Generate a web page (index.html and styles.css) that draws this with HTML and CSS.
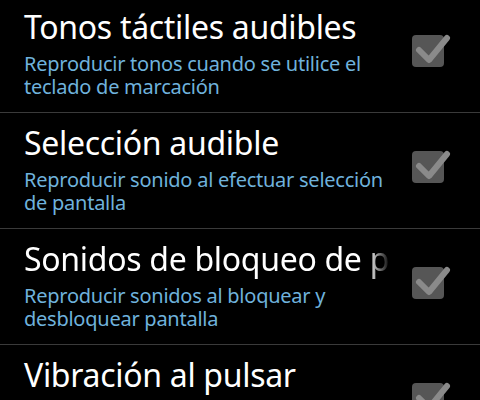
FILE: index.html
```html
<!DOCTYPE html>
<html lang="es">
<head>
<meta charset="utf-8">
<link rel="stylesheet" href="styles.css">
</head>
<body>
<div class="list">
  <div class="row">
    <div class="text">
      <div class="title">Tonos táctiles audibles</div>
      <div class="summary">Reproducir tonos cuando se utilice el teclado de marcación</div>
    </div>
    <div class="check"><svg viewBox="0 0 44 40" width="44" height="40"><rect x="4" y="6" width="32" height="32" rx="4" fill="#565656"/><path d="M11 21 L21 31 L39 9" fill="none" stroke="#8a8a8a" stroke-width="6" stroke-linecap="round" stroke-linejoin="round"/></svg></div>
  </div>
  <div class="row">
    <div class="text">
      <div class="title">Selección audible</div>
      <div class="summary">Reproducir sonido al efectuar selección de pantalla</div>
    </div>
    <div class="check"><svg viewBox="0 0 44 40" width="44" height="40"><rect x="4" y="6" width="32" height="32" rx="4" fill="#565656"/><path d="M11 21 L21 31 L39 9" fill="none" stroke="#8a8a8a" stroke-width="6" stroke-linecap="round" stroke-linejoin="round"/></svg></div>
  </div>
  <div class="row">
    <div class="text">
      <div class="title fade">Sonidos de bloqueo de pantalla</div>
      <div class="summary">Reproducir sonidos al bloquear y desbloquear pantalla</div>
    </div>
    <div class="check"><svg viewBox="0 0 44 40" width="44" height="40"><rect x="4" y="6" width="32" height="32" rx="4" fill="#565656"/><path d="M11 21 L21 31 L39 9" fill="none" stroke="#8a8a8a" stroke-width="6" stroke-linecap="round" stroke-linejoin="round"/></svg></div>
  </div>
  <div class="row">
    <div class="text">
      <div class="title">Vibración al pulsar</div>
      <div class="summary">Vibrar al pulsar teclas y al realizar otras acciones</div>
    </div>
    <div class="check"><svg viewBox="0 0 44 40" width="44" height="40"><rect x="4" y="6" width="32" height="32" rx="4" fill="#565656"/><path d="M11 21 L21 31 L39 9" fill="none" stroke="#8a8a8a" stroke-width="6" stroke-linecap="round" stroke-linejoin="round"/></svg></div>
  </div>
</div>
</body>
</html>
```

FILE: styles.css
```css
html, body {
  margin: 0;
  padding: 0;
  background: #000;
  overflow: hidden;
}
body {
  width: 480px;
  height: 400px;
  font-family: "Noto Sans", "Open Sans", sans-serif;
}
.list {
  margin-top: -3px;
}
.row {
  display: flex;
  align-items: flex-start;
  height: 115px;
  border-bottom: 1px solid #3a3a3a;
  box-sizing: content-box;
}
.text {
  width: 366px;
  margin-left: 24px;
  padding-top: 10px;
}
.title {
  color: #fff;
  font-size: 32px;
  line-height: 40px;
  letter-spacing: -0.3px;
  white-space: nowrap;
}
.title.fade {
  overflow: hidden;
  -webkit-mask-image: linear-gradient(to right, #000 344px, transparent 366px);
  mask-image: linear-gradient(to right, #000 344px, transparent 366px);
}
.summary {
  color: #6fb2dc;
  font-size: 20px;
  line-height: 23px;
  letter-spacing: -0.25px;
  margin-top: 5px;
}
.check {
  margin-left: 18px;
  margin-top: 32px;
  width: 44px;
  height: 40px;
}
.check svg {
  display: block;
}
```
